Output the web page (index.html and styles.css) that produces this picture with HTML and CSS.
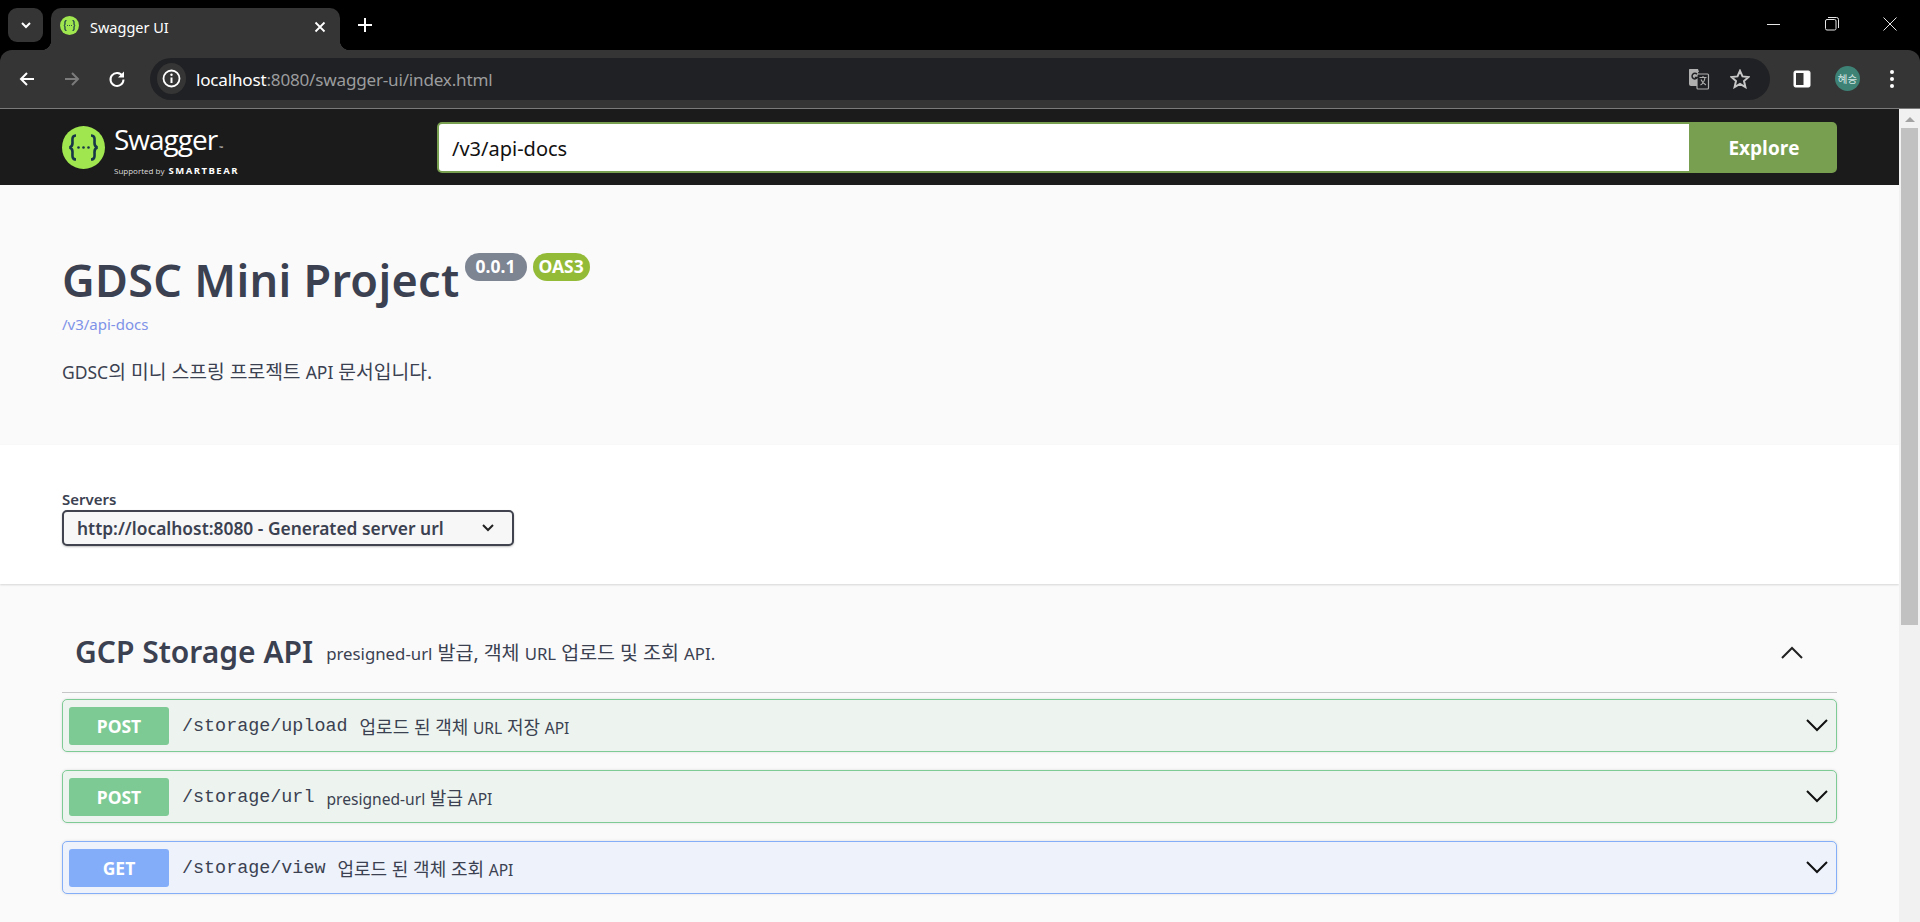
FILE: index.html
```html
<!DOCTYPE html>
<html lang="ko">
<head>
<meta charset="utf-8">
<title>Swagger UI</title>
<link rel="stylesheet" href="styles.css">
</head>
<body>
<div class="tabstrip">
  <div class="tabsearch"><svg width="14" height="14" viewBox="0 0 14 14"><path d="M3 5l4 4 4-4" fill="none" stroke="#fff" stroke-width="2"/></svg></div>
  <div class="tab">
    <svg class="favicon" width="19" height="19" viewBox="0 0 19 19"><circle cx="9.5" cy="9.5" r="9.5" fill="#9fe64f"/><path d="M6.5 4.5c-2 0-1.5 2-1.5 3.5 0 1-.5 1.500-1.200 1.500.7 0 1.200.5 1.200 1.500 0 1.500-.5 3.500 1.500 3.500M12.500 4.500c2 0 1.500 2 1.500 3.500 0 1 .5 1.500 1.200 1.500-.7 0-1.200.5-1.200 1.500 0 1.500.5 3.500-1.500 3.500" fill="none" stroke="#173647" stroke-width="1.200"/><path d="M7 9.500h.8M9.100 9.500h.8M11.200 9.500h.8" stroke="#173647" stroke-width="1.200"/></svg>
    <span class="tabtitle">Swagger UI</span>
    <svg class="tabclose" width="12" height="12" viewBox="0 0 12 12"><path d="M1.500 1.500l9 9M10.500 1.500l-9 9" stroke="#fff" stroke-width="1.800"/></svg>
  </div>
  <svg class="newtab" width="14" height="14" viewBox="0 0 14 14"><path d="M7 0v14M0 7h14" stroke="#fff" stroke-width="2"/></svg>
  <div class="winctrls">
    <svg width="14" height="14" viewBox="0 0 14 14"><path d="M0 7.500h13" stroke="#e6e6e6" stroke-width="1"/></svg>
    <svg width="14" height="14" viewBox="0 0 14 14"><rect x=".5" y="2.500" width="10.500" height="10.500" rx="1.500" fill="#000" stroke="#e6e6e6"/><path d="M3 .5h8.500a2 2 0 0 1 2 2V11" fill="none" stroke="#e6e6e6"/></svg>
    <svg width="14" height="14" viewBox="0 0 14 14"><path d="M.5.500l13 13M13.500.500l-13 13" stroke="#e6e6e6" stroke-width="1"/></svg>
  </div>
</div>

<div class="toolbar">
  <div class="navbtns">
    <svg width="18" height="18" viewBox="0 0 18 18"><path d="M16 9H3M9 3L3 9l6 6" fill="none" stroke="#fff" stroke-width="2"/></svg>
    <svg width="18" height="18" viewBox="0 0 18 18"><path d="M2 9h13M9 3l6 6-6 6" fill="none" stroke="#7b7b7b" stroke-width="2"/></svg>
    <svg width="18" height="18" viewBox="0 0 18 18"><path d="M14.500 6A6.500 6.500 0 1 0 15.500 9.500" fill="none" stroke="#fff" stroke-width="2"/><path d="M16 1.500V7.500H10z" fill="#fff"/></svg>
  </div>
  <div class="omnibox">
    <div class="infochip"><svg width="19" height="19" viewBox="0 0 19 19"><circle cx="9.500" cy="9.500" r="8" fill="none" stroke="#fff" stroke-width="1.800"/><path d="M9.500 8.500v5.500" stroke="#fff" stroke-width="2"/><circle cx="9.500" cy="5.800" r="1.200" fill="#fff"/></svg></div>
    <div class="url"><span class="host">localhost</span>:8080/swagger-ui/index.html</div>
    <svg class="translate" width="22" height="22" viewBox="0 0 22 22"><path d="M1.500 1h8.500l1 3h-1l3 14H3a2 2 0 0 1-2-2V1.500z" fill="#b0b0b0"/><rect x="9" y="6" width="11.500" height="15" rx="1" fill="#202124" stroke="#b0b0b0" stroke-width="1.200"/><path d="M11.500 9.500h7M15 8v1.500M12.500 17c3-1.500 4-4 4.500-7.500M13 11.500c1 2.500 3 4.500 5 5.500" fill="none" stroke="#b0b0b0" stroke-width="1.100"/><path d="M9 6.300A2.800 2.800 0 1 0 9.300 9.500H6.800" fill="none" stroke="#202124" stroke-width="1.500"/></svg>
    <svg class="star" width="20" height="20" viewBox="0 0 20 20"><path d="M10 1.800l2.500 5.600 6.100.6-4.600 4.100 1.400 6-5.400-3.100-5.400 3.100 1.400-6L1.400 8l6.100-.6z" fill="none" stroke="#c7c7c7" stroke-width="2"/></svg>
  </div>
  <svg class="sidepanel" width="18" height="18" viewBox="0 0 18 18"><rect x="1" y="1" width="16" height="16" rx="1.500" fill="#fff" stroke="#fff"/><rect x="3" y="3" width="7.500" height="12" fill="#353535"/></svg>
  <div class="avatar">혜승</div>
  <svg class="dots" width="6" height="20" viewBox="0 0 6 20"><circle cx="3" cy="3" r="2" fill="#fff"/><circle cx="3" cy="10" r="2" fill="#fff"/><circle cx="3" cy="17" r="2" fill="#fff"/></svg>
</div>

<div class="viewport">
  <main class="page">
    <header class="topbar">
      <div class="logo">
        <svg width="43" height="43" viewBox="0 0 43 43"><circle cx="21.500" cy="21.500" r="21.500" fill="#9fe64f"/><path d="M14 9.500c-4.500 0-3.500 4.500-3.500 7.500 0 2.500-1 4-3 4.500 2 .5 3 2 3 4.500 0 3-1 7.500 3.500 7.500M29 9.500c4.500 0 3.500 4.500 3.500 7.500 0 2.500 1 4 3 4.500-2 .5-3 2-3 4.500 0 3 1 7.500-3.500 7.500" fill="none" stroke="#173647" stroke-width="2.600"/><circle cx="16.500" cy="21.500" r="1.300" fill="#173647"/><circle cx="21.500" cy="21.500" r="1.300" fill="#173647"/><circle cx="26.500" cy="21.500" r="1.300" fill="#173647"/></svg>
        <div class="logotext">
          <div class="wordmark">Swagger<sup class="tm">™</sup></div>
          <div class="support">Supported by <b class="smartbear">SMARTBEAR</b></div>
        </div>
      </div>
      <div class="explore">
        <div class="exploreinput">/v3/api-docs</div>
        <div class="explorebtn">Explore</div>
      </div>
    </header>

    <section class="info">
      <div class="titlerow">
        <h1 class="title">GDSC Mini Project</h1>
        <span class="badge badge-version">0.0.1</span>
        <span class="badge badge-oas">OAS3</span>
      </div>
      <a class="speclink">/v3/api-docs</a>
      <p class="desc">GDSC<span class="ko">의 미니 스프링 프로젝트 </span>API<span class="ko"> 문서입니다.</span></p>
    </section>

    <section class="servers">
      <div class="serverlabel">Servers</div>
      <div class="serverselect">
        <span>http://localhost:8080 - Generated server url</span>
        <svg width="14" height="10" viewBox="0 0 14 10"><path d="M2 2l5 5 5-5" fill="none" stroke="#222" stroke-width="2"/></svg>
      </div>
    </section>

    <section class="tags">
      <div class="taghead">
        <h2 class="tagname">GCP Storage API</h2>
        <span class="tagdesc">presigned-url<span class="ko"> 발급, 객체 </span>URL<span class="ko"> 업로드 및 조회 </span>API.</span>
        <svg class="tagchev" width="22" height="13" viewBox="0 0 22 13"><path d="M1 12L11 2l10 10" fill="none" stroke="#222" stroke-width="2"/></svg>
      </div>
      <div class="oplist">
        <div class="op op-post">
          <span class="method">POST</span>
          <span class="path">/storage/upload</span>
          <span class="summary"><span class="ko">업로드 된 객체 </span>URL<span class="ko"> 저장 </span>API</span>
          <svg class="opchev" width="22" height="13" viewBox="0 0 22 13"><path d="M1 1l10 10L21 1" fill="none" stroke="#111" stroke-width="2"/></svg>
        </div>
        <div class="op op-post">
          <span class="method">POST</span>
          <span class="path">/storage/url</span>
          <span class="summary">presigned-url<span class="ko"> 발급 </span>API</span>
          <svg class="opchev" width="22" height="13" viewBox="0 0 22 13"><path d="M1 1l10 10L21 1" fill="none" stroke="#111" stroke-width="2"/></svg>
        </div>
        <div class="op op-get">
          <span class="method">GET</span>
          <span class="path">/storage/view</span>
          <span class="summary"><span class="ko">업로드 된 객체 조회 </span>API</span>
          <svg class="opchev" width="22" height="13" viewBox="0 0 22 13"><path d="M1 1l10 10L21 1" fill="none" stroke="#111" stroke-width="2"/></svg>
        </div>
      </div>
    </section>
  </main>
  <aside class="scrollbar">
    <div class="scrollarrow"></div>
    <div class="scrollthumb"></div>
  </aside>
</div>
</body>
</html>
```
FILE: styles.css
```css
* { box-sizing: border-box; }
html, body { margin: 0; height: 100%; overflow: hidden; }
body {
  background: #000;
  font-family: "Noto Sans", "Noto Sans CJK KR", sans-serif;
  color: #3b4151;
}

/* browser chrome */
.tabstrip { height: 50px; background: #000; display: flex; align-items: flex-start; padding-left: 8px; }
.tabsearch { width: 35px; height: 34px; margin-top: 8px; background: #353535; border-radius: 9px; display: flex; align-items: center; justify-content: center; flex: none; }
.tab { position: relative; width: 289px; height: 42px; margin: 8px 0 0 8px; background: #353535; border-radius: 10px 10px 0 0; display: flex; align-items: flex-start; padding: 8px 0 0 9px; color: #fff; flex: none; }
.tab::before, .tab::after { content: ""; position: absolute; bottom: 0; width: 10px; height: 10px; }
.tab::before { left: -10px; background: radial-gradient(circle at 0 0, #000 10px, #353535 10.500px); }
.tab::after { right: -10px; background: radial-gradient(circle at 100% 0, #000 10px, #353535 10.500px); }
.favicon { flex: none; }
.tabtitle { margin-left: 11px; font-size: 14.500px; line-height: 23px; flex: 1; }
.tabclose { flex: none; margin: 5px 14px 0 0; }
.newtab { margin: 18px 0 0 18px; flex: none; }
.winctrls { margin-left: auto; display: flex; gap: 44px; padding: 17px 23px 0 0; }
.winctrls svg { display: block; }

.toolbar { height: 59px; background: #353535; border-bottom: 1px solid #7a7a7a; border-radius: 12px 12px 0 0; display: flex; align-items: center; padding: 0 0 1px 18px; }
.navbtns { display: flex; gap: 27px; width: 132px; flex: none; }
.omnibox { width: 1620px; height: 42px; background: #202124; border-radius: 21px; display: flex; align-items: center; padding: 0 20px 0 7px; flex: none; }
.infochip { width: 29px; height: 31px; background: #353535; border-radius: 50%; display: flex; align-items: center; justify-content: center; flex: none; }
.url { margin: 2px 0 0 10px; font-size: 17.100px; color: #9b9c9e; flex: 1; letter-spacing: -.2px; white-space: nowrap; }
.host { color: #fff; }
.translate { flex: none; margin-right: 20px; }
.star { flex: none; }
.sidepanel { flex: none; margin-left: 23px; }
.avatar { flex: none; width: 25px; height: 25px; margin-left: 24px; border-radius: 50%; background: #3e8276; color: #d6e6e3; font-size: 10.500px; line-height: 25px; text-align: center; white-space: nowrap; font-family: "Noto Sans CJK KR", sans-serif; }
.dots { flex: none; margin-left: 29px; }

.viewport { height: 813px; display: flex; }
.page { flex: 1; min-width: 0; background: #fafafa; overflow: hidden; }

.scrollbar { width: 21px; flex: none; background: #f1f1f1; padding: 0 2px; }
.scrollarrow { width: 0; height: 0; margin: 8px auto 6px; border-left: 5px solid transparent; border-right: 5px solid transparent; border-bottom: 5px solid #a3a3a3; }
.scrollthumb { height: 497px; background: #c1c1c1; margin-top: 2px; }

/* swagger */
.topbar { height: 76px; background: #1b1b1b; display: flex; align-items: center; padding: 0 62px; }
.logo { width: 375px; flex: none; display: flex; align-items: center; gap: 9px; color: #fff; }
.logo svg { flex: none; }
.logotext { margin-top: 2px; }
.wordmark { font-family: "Open Sans", sans-serif; font-weight: 400; font-size: 28px; line-height: 36px; letter-spacing: -1px; }
.tm { font-size: 5px; vertical-align: baseline; margin-left: 2px; }
.support { font-size: 8px; line-height: 10px; color: #ddd; font-family: "Open Sans", sans-serif; white-space: nowrap; }
.smartbear { font-size: 9.500px; letter-spacing: 1.500px; margin-left: 2px; font-weight: 700; color: #fff; }
.explore { flex: 1; display: flex; height: 51px; background: #789e4f; border-radius: 5px; }
.exploreinput { flex: 1; margin: 2px 0 2px 2px; background: #fff; border-radius: 3px 0 0 3px; padding-left: 13px; font-size: 20px; line-height: 49px; color: #111; }
.explorebtn { width: 148px; padding-left: 2px; text-align: center; font-family: "Open Sans", sans-serif; font-weight: 700; font-size: 19px; line-height: 53px; color: #fff; }

.info { height: 260px; background: #fafafa; padding: 62px 62px 0; }
.titlerow { display: flex; align-items: flex-start; }
.title { margin: 0; font-size: 45px; line-height: 66px; font-weight: 600; letter-spacing: .3px; color: #3b4151; white-space: nowrap; }
.badge { margin-top: 6px; height: 28px; border-radius: 14px; color: #fff; font-weight: 700; font-size: 17.500px; line-height: 27px; text-align: center; flex: none; }
.badge-version { width: 62px; margin-left: 5px; background: #7d8492; }
.badge-oas { width: 57px; margin-left: 6px; background: #94bb38; }
.speclink { display: block; margin-top: 1px; font-size: 15px; line-height: 20px; color: #7e93e8; }
.desc { margin: 24px 0 0; font-size: 17.500px; line-height: 28px; color: #3b4151; }
.desc .ko { font-size: 19.300px; }

.servers { height: 139px; background: #fff; padding: 45px 62px 0; box-shadow: 0 1px 2px rgba(0,0,0,.15); position: relative; }
.serverlabel { font-size: 15px; font-weight: 600; line-height: 18px; color: #3b4151; }
.serverselect { width: 452px; height: 36px; margin-top: 2px; background: #f7f7f7; border: 2px solid #41444e; border-radius: 5px; box-shadow: 0 1px 2px rgba(0,0,0,.25); display: flex; align-items: center; justify-content: space-between; padding: 0 17px 0 13px; font-weight: 600; font-size: 17.400px; color: #3b4151; white-space: nowrap; }

.tags { padding: 0 62px; }
.taghead { height: 109px; margin-bottom: 6px; padding: 28px 13px 0; border-bottom: 1px solid #c6c6c9; display: flex; align-items: center; }
.tagname { margin: 0; font-size: 30px; font-weight: 600; color: #3b4151; line-height: 48px; white-space: nowrap; }
.tagdesc { margin: 0 0 2px 13px; font-size: 16.800px; color: #3b4151; white-space: nowrap; }
.tagdesc .ko { font-size: 19.500px; }
.tagchev { margin-left: auto; margin-right: 21px; }

.oplist { display: flex; flex-direction: column; gap: 18px; }
.op { height: 53px; border: 1px solid; border-radius: 5px; display: flex; align-items: center; padding: 0 8px 0 6px; box-shadow: 0 0 3px rgba(0,0,0,.12); }
.op-post { background: #edf4ef; border-color: #7fcb96; }
.op-get { background: #edf2fb; border-color: #84aef8; }
.method { width: 100px; height: 38px; flex: none; border-radius: 3px; color: #fff; font-weight: 700; font-size: 17.500px; line-height: 38px; text-align: center; }
.op-post .method { background: #7dca94; }
.op-get .method { background: #83adf8; }
.path { margin: 2px 0 0 13px; font-family: "Liberation Mono", monospace; font-size: 18.400px; color: #3b4151; white-space: nowrap; }
.summary { margin-left: 12px; font-size: 15.600px; color: #3b4151; white-space: nowrap; }
.summary .ko { font-size: 18px; }
.opchev { margin-left: auto; }
```
